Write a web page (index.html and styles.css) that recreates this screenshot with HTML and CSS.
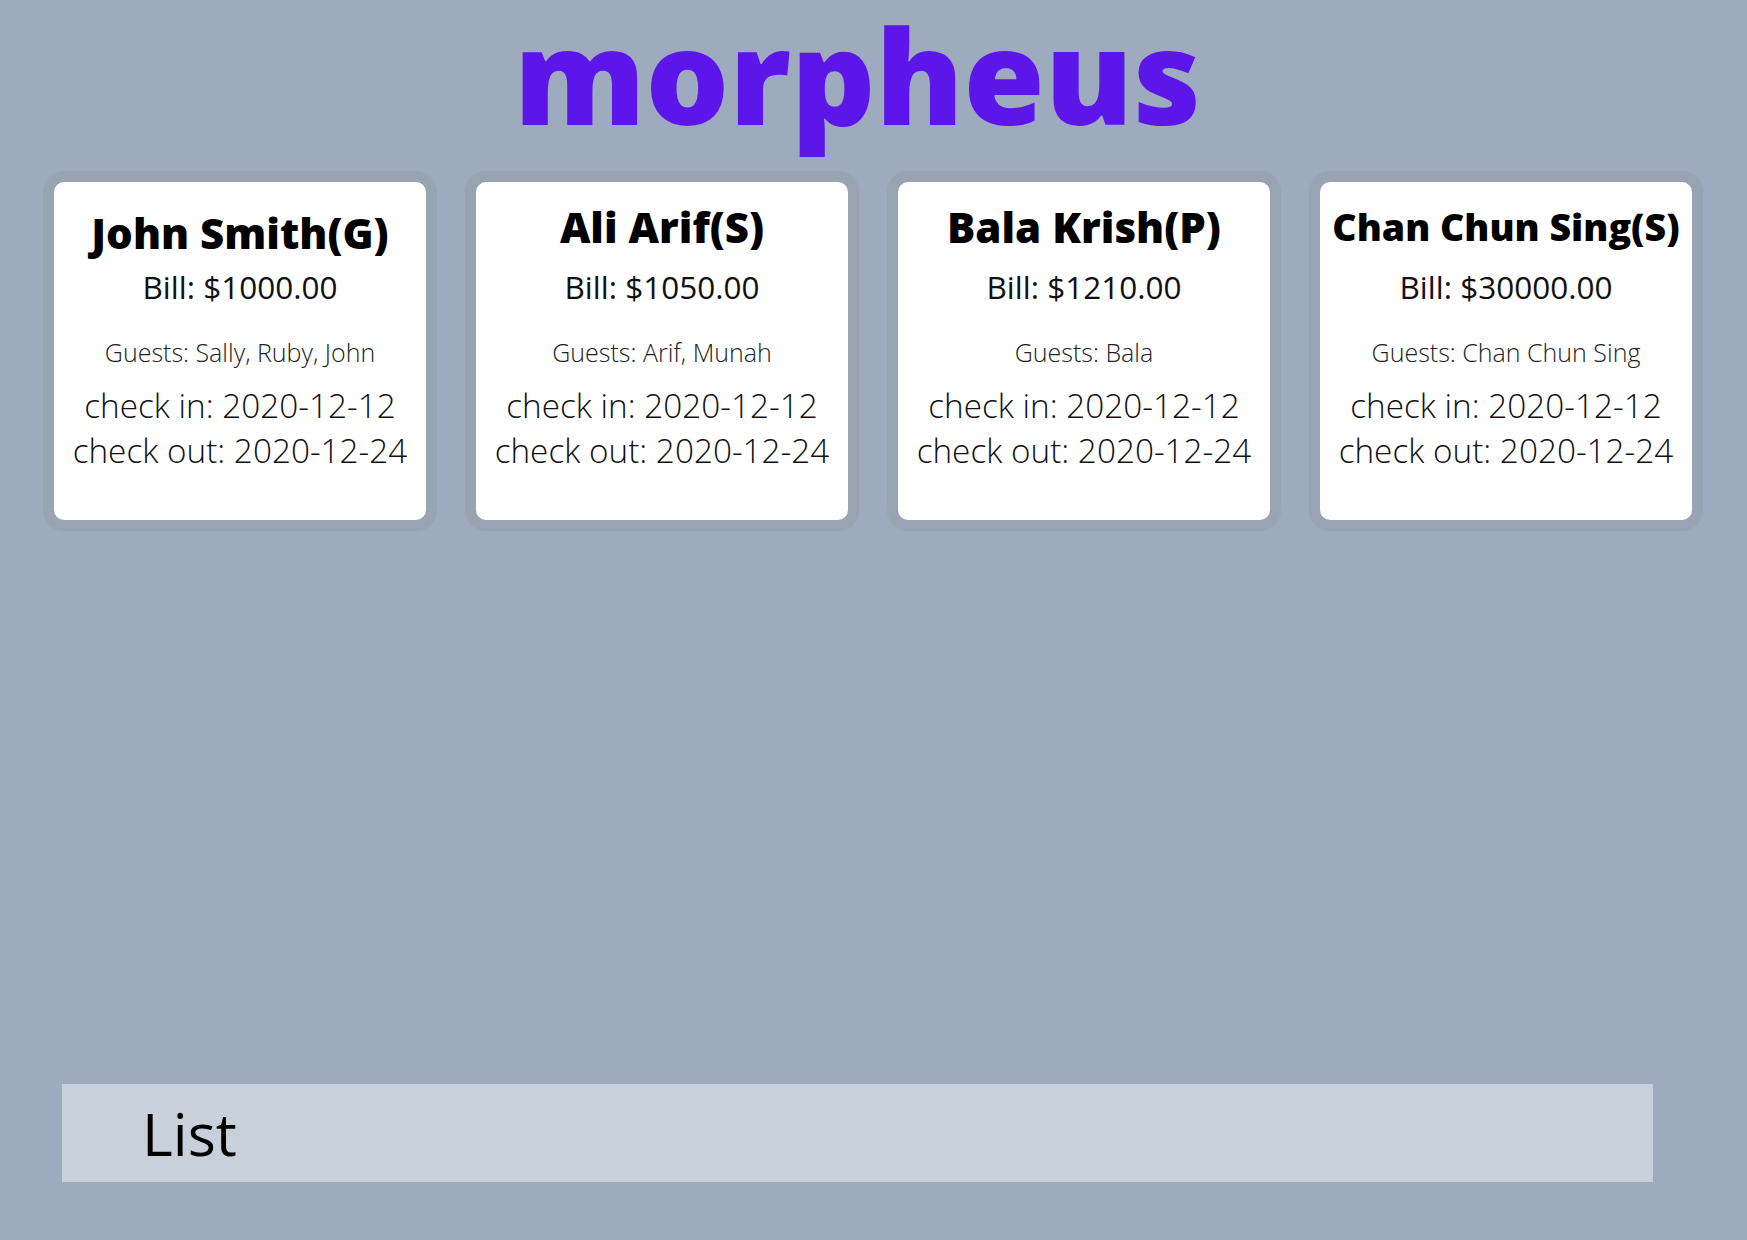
FILE: index.html
```html
<!DOCTYPE html>
<html lang="en">
<head>
<meta charset="utf-8">
<title>morpheus</title>
<link rel="stylesheet" href="styles.css">
</head>
<body>
  <header class="brand">
    <h1 class="brand-title">morpheus</h1>
  </header>
  <main class="cards">
    <article class="card">
      <h2 class="card-title title-low">John Smith(G)</h2>
      <p class="card-bill">Bill: $1000.00</p>
      <p class="card-guests">Guests: Sally, Ruby, John</p>
      <p class="card-dates">check in: 2020-12-12<br>check out: 2020-12-24</p>
    </article>
    <article class="card">
      <h2 class="card-title">Ali Arif(S)</h2>
      <p class="card-bill">Bill: $1050.00</p>
      <p class="card-guests">Guests: Arif, Munah</p>
      <p class="card-dates">check in: 2020-12-12<br>check out: 2020-12-24</p>
    </article>
    <article class="card">
      <h2 class="card-title">Bala Krish(P)</h2>
      <p class="card-bill">Bill: $1210.00</p>
      <p class="card-guests">Guests: Bala</p>
      <p class="card-dates">check in: 2020-12-12<br>check out: 2020-12-24</p>
    </article>
    <article class="card">
      <h2 class="card-title title-fit">Chan Chun Sing(S)</h2>
      <p class="card-bill">Bill: $30000.00</p>
      <p class="card-guests">Guests: Chan Chun Sing</p>
      <p class="card-dates">check in: 2020-12-12<br>check out: 2020-12-24</p>
    </article>
  </main>
  <footer class="list-bar">
    <span class="list-label">List</span>
  </footer>
</body>
</html>
```

FILE: styles.css
```css
html, body {
  margin: 0;
  padding: 0;
}

body {
  background: #9eaabd;
  font-family: "Open Sans", "Liberation Sans", sans-serif;
  color: #000;
  height: 100vh;
  display: flex;
  flex-direction: column;
}

.brand {
  display: flex;
  justify-content: center;
  padding-right: 32px;
}

.brand-title {
  margin: 0;
  font-size: 131.5px;
  line-height: 148px;
  font-weight: 800;
  color: #5d16ea;
  white-space: nowrap;
}

.cards {
  display: flex;
  gap: 50px;
  padding: 0 54px;
  margin-top: 34px;
  align-items: flex-start;
}

.card {
  width: 372px;
  height: 338px;
  box-sizing: border-box;
  flex: none;
  background: #fff;
  border-radius: 10px;
  box-shadow: 0 0 1px 11px #98a4b2;
  padding: 18px 4px 0;
  text-align: center;
}

.card-title {
  margin: 0;
  height: 66px;
  box-sizing: border-box;
  font-size: 42px;
  font-weight: 800;
  line-height: 54px;
  white-space: nowrap;
}

.title-low { padding-top: 6px; }
.title-fit { font-size: 37.5px; }

.card-bill {
  margin: 0;
  font-size: 31.5px;
  line-height: 41px;
  font-weight: 400;
  color: #111;
}

.card-guests {
  margin: 28px 0 0;
  font-size: 25px;
  line-height: 34px;
  font-weight: 300;
  color: #222;
}

.card-dates {
  margin: 14px 0 0;
  font-size: 33.3px;
  line-height: 45px;
  font-weight: 300;
  color: #111;
}

.list-bar {
  margin: auto 0 58px 62px;
  width: 1591px;
  height: 98px;
  background: #c8d0da;
  box-sizing: border-box;
  padding-left: 80px;
  display: flex;
  align-items: center;
}

.list-label {
  font-size: 59px;
  line-height: 98px;
  font-weight: 400;
  color: #000;
}
```
